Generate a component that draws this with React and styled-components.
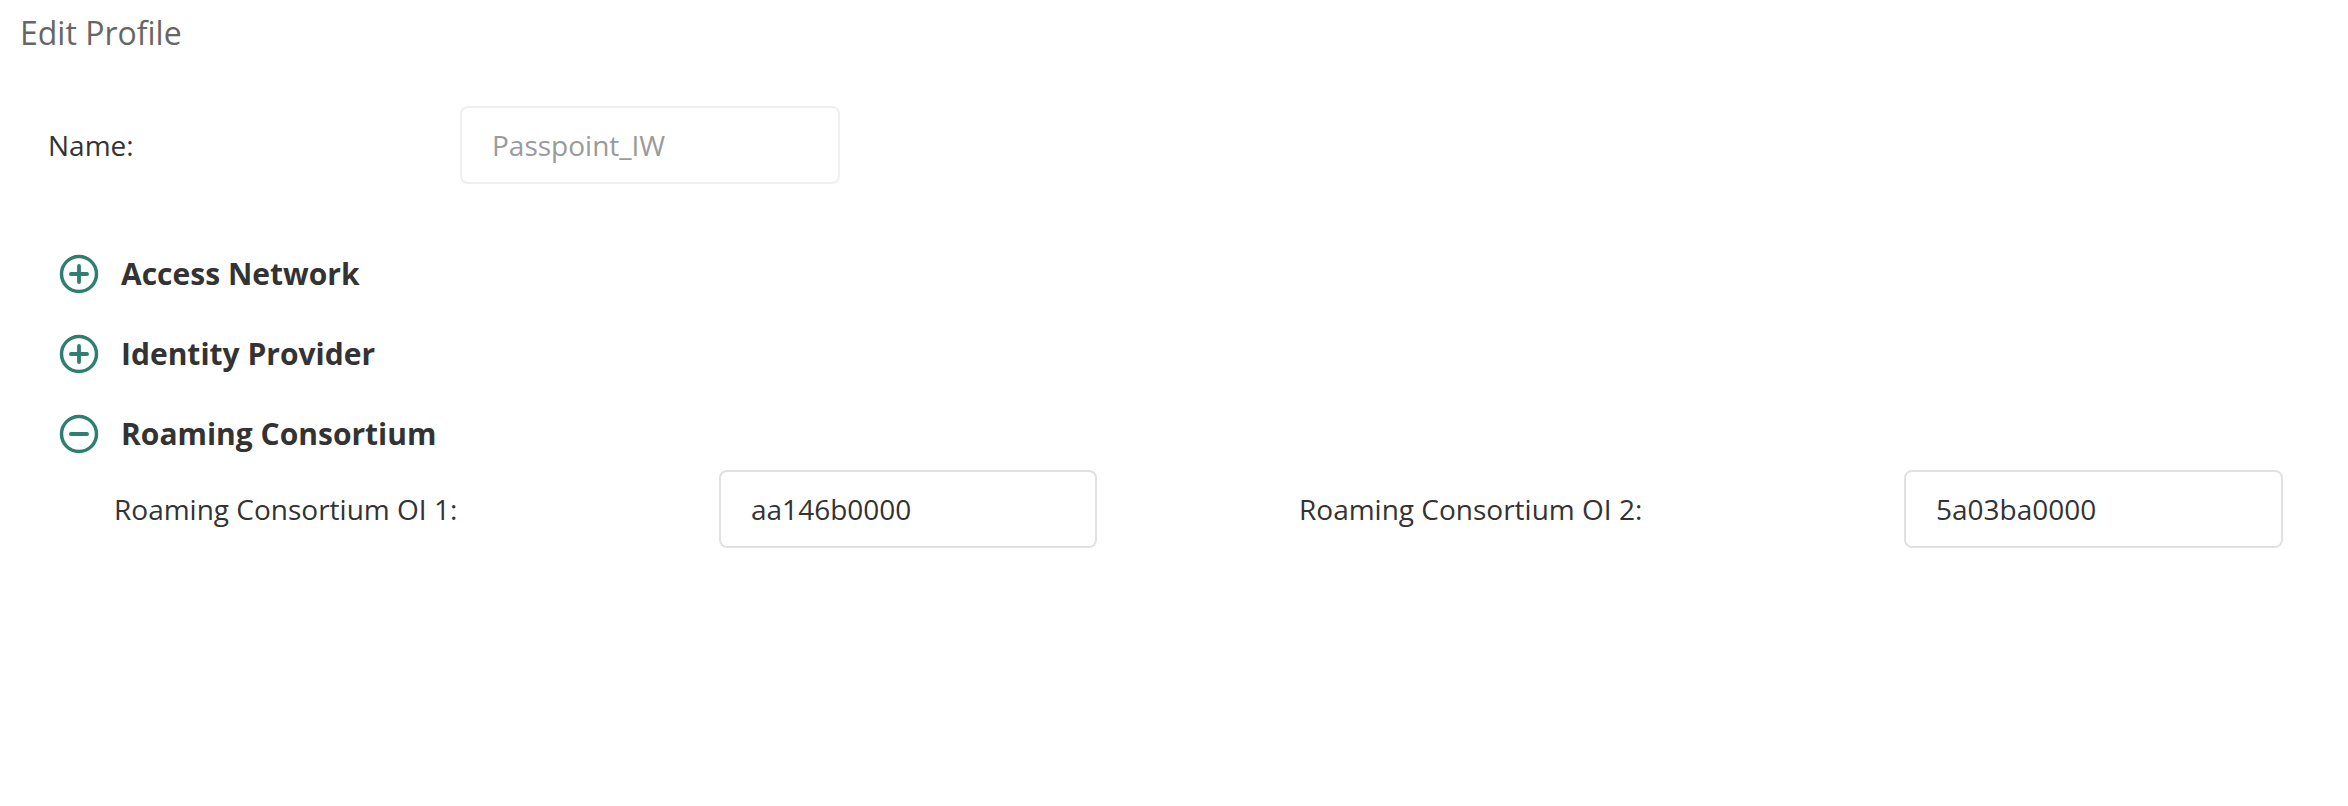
import React from "react";
import styled, { createGlobalStyle } from "styled-components";

const GlobalStyle = createGlobalStyle`
  html, body {
    margin: 0;
    padding: 0;
    background: #ffffff;
  }
  body {
    font-family: "Open Sans", "Noto Sans", sans-serif;
    color: #333333;
  }
  * { box-sizing: border-box; }
`;

const Page = styled.div`
  width: 2348px;
  min-height: 806px;
  padding-top: 14px;
  background: #ffffff;
`;

const Title = styled.h1`
  margin: 0;
  padding-left: 20px;
  font-size: 32px;
  line-height: 38px;
  font-weight: 400;
  color: #666666;
`;

const NameRow = styled.div`
  display: grid;
  grid-template-columns: 412px 380px;
  align-items: center;
  margin-top: 54px;
  padding-left: 48px;
`;

const Label = styled.label`
  font-size: 28px;
  line-height: 36px;
  color: #333333;
`;

const TextInput = styled.input`
  height: 78px;
  width: ${(p) => p.$width || 378}px;
  padding: 0 30px;
  border: 2px solid ${(p) => (p.$muted ? "#efefef" : "#e1e1e1")};
  border-radius: 8px;
  background: #ffffff;
  font-family: "Open Sans", "Noto Sans", sans-serif;
  font-size: 28px;
  color: ${(p) => (p.$muted ? "#9a9a9a" : "#333333")};
  outline: none;
  &:disabled {
    background: #ffffff;
    color: #9a9a9a;
    -webkit-text-fill-color: #9a9a9a;
  }
`;

const SectionList = styled.div`
  display: flex;
  flex-direction: column;
  gap: 38px;
  margin-top: 69px;
  padding-left: 58px;
`;

const SectionHeader = styled.div`
  display: flex;
  align-items: center;
  height: 42px;
  gap: 21px;
  cursor: pointer;
`;

const SectionTitle = styled.span`
  font-size: 30px;
  font-weight: 700;
  color: #333333;
  line-height: 40px;
`;

const SectionBody = styled.div`
  margin-top: 15px;
  padding-left: 56px;
`;

const FieldGrid = styled.div`
  display: flex;
  gap: 202px;
`;

const FieldPair = styled.div`
  display: grid;
  grid-template-columns: 605px 378px;
  align-items: center;
`;

const Toggle = ({ open }) => (
  <svg width="42" height="42" viewBox="0 0 24 24" fill="none">
    <circle cx="12" cy="12" r="10" stroke="#2f7f70" strokeWidth="2" />
    <path
      d={open ? "M7.4 12h9.2" : "M7.4 12h9.2M12 7.4v9.2"}
      stroke="#2f7f70"
      strokeWidth="2.2"
      strokeLinecap="round"
    />
  </svg>
);

const Section = ({ title, open, children }) => (
  <div>
    <SectionHeader>
      <Toggle open={open} />
      <SectionTitle>{title}</SectionTitle>
    </SectionHeader>
    {open && <SectionBody>{children}</SectionBody>}
  </div>
);

export default function App() {
  return (
    <>
      <GlobalStyle />
      <Page>
        <Title>Edit Profile</Title>
        <NameRow>
          <Label>Name:</Label>
          <TextInput $width={380} $muted disabled defaultValue="Passpoint_IW" />
        </NameRow>
        <SectionList>
          <Section title="Access Network" />
          <Section title="Identity Provider" />
          <Section title="Roaming Consortium" open>
            <FieldGrid>
              <FieldPair>
                <Label>Roaming Consortium OI 1:</Label>
                <TextInput defaultValue="aa146b0000" />
              </FieldPair>
              <FieldPair>
                <Label>Roaming Consortium OI 2:</Label>
                <TextInput $width={379} defaultValue="5a03ba0000" />
              </FieldPair>
            </FieldGrid>
          </Section>
        </SectionList>
      </Page>
    </>
  );
}
